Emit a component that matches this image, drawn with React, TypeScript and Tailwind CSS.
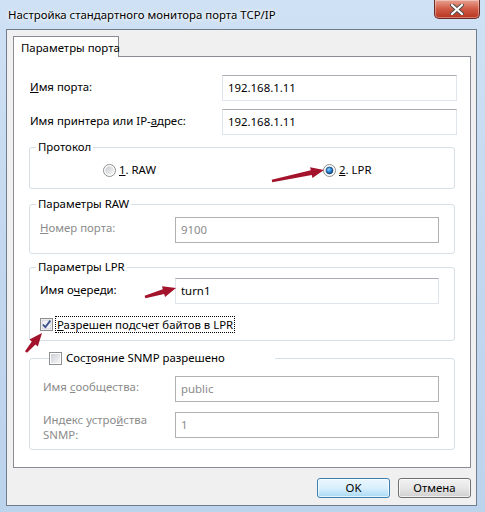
import React from "react";

function arrowPoints(x1: number, y1: number, x2: number, y2: number) {
  const dx = x2 - x1;
  const dy = y2 - y1;
  const len = Math.hypot(dx, dy);
  const ux = dx / len;
  const uy = dy / len;
  const nx = -uy;
  const ny = ux;
  const h = 13;
  const bx = x2 - ux * h;
  const by = y2 - uy * h;
  const pts: [number, number][] = [
    [x1 + nx * 1.3, y1 + ny * 1.3],
    [bx + nx * 2.4, by + ny * 2.4],
    [bx + nx * 5.5, by + ny * 5.5],
    [x2, y2],
    [bx - nx * 5.5, by - ny * 5.5],
    [bx - nx * 2.4, by - ny * 2.4],
    [x1 - nx * 1.3, y1 - ny * 1.3],
  ];
  return pts.map((p) => p.map((v) => v.toFixed(1)).join(",")).join(" ");
}

function Radio({ checked }: { checked?: boolean }) {
  return (
    <svg width="13" height="13" viewBox="0 0 13 13" className="shrink-0">
      <defs>
        <linearGradient id={checked ? "rg1" : "rg0"} x1="0" y1="0" x2="1" y2="1">
          <stop offset="0" stopColor="#c9cbcf" />
          <stop offset="1" stopColor="#f7f7f7" />
        </linearGradient>
        <radialGradient id="rdot" cx="0.4" cy="0.35" r="0.7">
          <stop offset="0" stopColor="#8fd0ff" />
          <stop offset="0.5" stopColor="#2a86d6" />
          <stop offset="1" stopColor="#0f3f75" />
        </radialGradient>
      </defs>
      <circle cx="6.5" cy="6.5" r="6" fill="#fff" stroke="#8e8f8f" strokeWidth="1" />
      <circle cx="6.5" cy="6.5" r="4.3" fill={checked ? "url(#rg1)" : "url(#rg0)"} />
      {checked && <circle cx="6.5" cy="6.5" r="3.4" fill="url(#rdot)" stroke="#0e3866" strokeWidth="0.6" />}
    </svg>
  );
}

function Checkbox({ checked }: { checked?: boolean }) {
  return (
    <svg width="13" height="13" viewBox="0 0 13 13" className="shrink-0">
      <defs>
        <linearGradient id={checked ? "cg1" : "cg0"} x1="0" y1="0" x2="1" y2="1">
          <stop offset="0" stopColor="#cbcfd5" />
          <stop offset="1" stopColor="#f7f7f7" />
        </linearGradient>
      </defs>
      <rect x="0.5" y="0.5" width="12" height="12" fill="#fff" stroke="#8e8f8f" />
      <rect x="2" y="2" width="9" height="9" fill={checked ? "#eef0f4" : "url(#cg0)"} stroke={checked ? "#b4b9c2" : "none"} strokeWidth="0.6" />
      {checked && (
        <path d="M3 6.5 L5.3 9.2 L10.3 2.6" fill="none" stroke="#3b4f8a" strokeWidth="1.8" strokeLinejoin="round" />
      )}
    </svg>
  );
}

function Field({ value, disabled, w }: { value: string; disabled?: boolean; w: string }) {
  return (
    <div
      className={`${w} h-[26px] shrink-0 border bg-white flex items-center pl-[5px] ${
        disabled
          ? "border-[#b1b1b1] text-[#8b8b8b]"
          : "border-[#e0e5ec] border-t-[#abadb3] text-black"
      }`}
    >
      {value}
    </div>
  );
}

export default function App() {
  return (
    <div className="relative w-[485px] h-[512px] overflow-hidden bg-gradient-to-b from-[#cfe1f4] via-[#c3d8ef] to-[#bcd3ec] pl-[6px] pr-[8px] pb-[6px] font-['Noto_Sans',sans-serif] text-[11.4px] leading-[16px] text-black">
      {/* title bar */}
      <div className="h-[29px] -ml-[6px] -mr-[8px] flex items-start">
        <div className="pl-[8px] pt-[7px] whitespace-nowrap text-black [text-shadow:0_0_6px_#ffffff,0_0_3px_#ffffff]">
          Настройка стандартного монитора порта TCP/IP
        </div>
        <div className="flex-1" />
        <div className="mr-[5px] w-[46px] h-[19px] rounded-b-[5px] border border-t-0 border-[#6b2a24] bg-gradient-to-b from-[#e8a192] via-[#cf5a45] to-[#b8341f] flex items-center justify-center shadow-[inset_0_0_0_1px_rgba(255,255,255,0.35)]">
          <svg width="14" height="11" viewBox="0 0 14 11">
            <path d="M2 1 L12 10 M12 1 L2 10" stroke="#4a4a4a" strokeWidth="4" strokeLinecap="round" />
            <path d="M2 1 L12 10 M12 1 L2 10" stroke="#ffffff" strokeWidth="2.2" strokeLinecap="round" />
          </svg>
        </div>
      </div>

      {/* inner window */}
      <div className="h-[477px] border border-[#6f7d8c] bg-[#f0f0f0] flex flex-col">
        <div className="mt-[6px] ml-[6px] mr-[5px] flex flex-col">
          {/* tab header */}
          <div className="relative z-10 -mb-px w-[106px] h-[21px] border border-b-0 border-[#898c95] bg-white flex items-center pl-[7px] pt-[1px] whitespace-nowrap">
            Параметры порта
          </div>
          {/* panel */}
          <div className="h-[412px] border border-[#898c95] bg-white flex flex-col">
            {/* row 1 */}
            <div className="mt-[18px] pl-[16px] pr-[13px] flex items-center">
              <div className="flex-1 -mt-[3px]">
                <span className="underline">И</span>мя порта:
              </div>
              <Field value="192.168.1.11" w="w-[235px]" />
            </div>
            {/* row 2 */}
            <div className="mt-[8px] pl-[16px] pr-[13px] flex items-center">
              <div className="flex-1 -mt-[3px]">
                Имя принтера или IP-<span className="underline">а</span>дрес:
              </div>
              <Field value="192.168.1.11" w="w-[235px]" />
            </div>

            {/* Protocol */}
            <fieldset className="mt-[4px] mx-[15px] border border-[#d5dfe5] rounded-[3px] pt-[7px] pb-[10px]">
              <legend className="ml-[6px] px-[2px] leading-[16px]">Протокол</legend>
              <div className="flex items-center h-[16px] pl-[73px]">
                <div className="w-[220px] flex items-center gap-[3px]">
                  <Radio />
                  <span>
                    <span className="underline">1</span>. RAW
                  </span>
                </div>
                <div className="flex items-center gap-[3px]">
                  <Radio checked />
                  <span>
                    <span className="underline">2</span>. LPR
                  </span>
                </div>
              </div>
            </fieldset>

            {/* RAW params */}
            <fieldset className="mt-[7px] mx-[15px] border border-[#d5dfe5] rounded-[3px] pt-[5px] pb-[10px] pl-[10px] pr-[15px]">
              <legend className="ml-[-4px] px-[2px] leading-[16px]">Параметры RAW</legend>
              <div className="flex items-center">
                <div className="flex-1 text-[#8b8b8b] -mt-[4px]">
                  <span className="underline">Н</span>омер порта:
                </div>
                <Field value="9100" disabled w="w-[264px]" />
              </div>
            </fieldset>

            {/* LPR params */}
            <fieldset className="mt-[5px] mx-[15px] border border-[#d5dfe5] rounded-[3px] pt-[3px] pb-[7px] pl-[10px] pr-[15px]">
              <legend className="ml-[-4px] px-[2px] leading-[16px]">Параметры LPR</legend>
              <div className="flex items-center">
                <div className="flex-1 -mt-[3px]">
                  Имя о<span className="underline">ч</span>ереди:
                </div>
                <Field value="turn1" w="w-[264px]" />
              </div>
              <div className="mt-[12px] flex items-center h-[17px]">
                <Checkbox checked />
                <span className="ml-[2px] border border-dotted border-black px-[1px] leading-[15px]">
                  <span className="underline">Р</span>азрешен подсчет байтов в LPR
                </span>
              </div>
            </fieldset>

            {/* SNMP */}
            <fieldset className="mt-[9px] mx-[15px] border border-[#d5dfe5] rounded-[3px] pt-[10px] pb-[11px] pl-[13px] pr-[15px]">
              <legend className="ml-[6px] pr-[50px] leading-[16px]">
                <span className="flex items-center gap-[4px]">
                  <Checkbox />
                  <span>
                    Сос<span className="underline">т</span>ояние SNMP разрешено
                  </span>
                </span>
              </legend>
              <div className="flex items-center">
                <div className="flex-1 text-[#8b8b8b] -mt-[4px]">
                  Имя <span className="underline">с</span>ообщества:
                </div>
                <Field value="public" disabled w="w-[264px]" />
              </div>
              <div className="mt-[10px] h-[26px] flex items-start">
                <div className="flex-1 text-[#8b8b8b]">
                  <div className="leading-[15px]">
                    Индекс устро<span className="underline">й</span>ства
                  </div>
                  <div className="leading-[15px]">SNMP:</div>
                </div>
                <Field value="1" disabled w="w-[264px]" />
              </div>
            </fieldset>
          </div>
        </div>

        {/* buttons */}
        <div className="mt-[10px] mr-[5px] flex justify-end gap-[8px]">
          <button className="w-[73px] h-[20px] rounded-[3px] border border-[#3c7fb1] bg-gradient-to-b from-[#eaf6fd] via-[#d9f0fc] to-[#a7d9f5] text-[11.4px] leading-[16px] text-black shadow-[inset_0_0_0_1px_rgba(255,255,255,0.7)]">
            OK
          </button>
          <button className="w-[73px] h-[20px] rounded-[3px] border border-[#707070] bg-gradient-to-b from-[#f2f2f2] via-[#e6e6e6] to-[#cfcfcf] text-[11.4px] leading-[16px] text-black shadow-[inset_0_0_0_1px_rgba(255,255,255,0.7)]">
            Отмена
          </button>
        </div>
      </div>

      {/* annotation arrows */}
      <svg className="absolute left-0 top-0 pointer-events-none" width="485" height="512" viewBox="0 0 485 512">
        <polygon points={arrowPoints(272, 181, 324, 170)} fill="#a3142c" />
        <polygon points={arrowPoints(145, 297, 176, 288)} fill="#a3142c" />
        <polygon points={arrowPoints(26, 352, 42, 333)} fill="#a3142c" />
      </svg>
    </div>
  );
}
